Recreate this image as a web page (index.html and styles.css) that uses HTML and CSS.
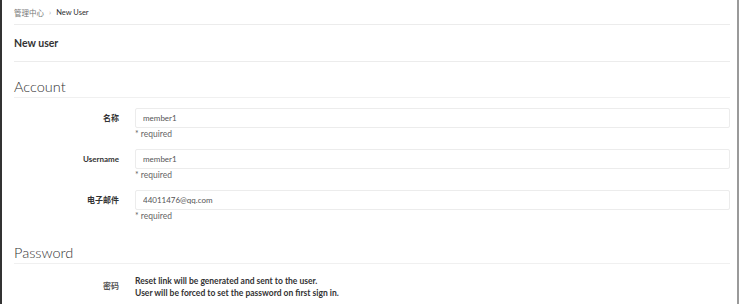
FILE: index.html
```html
<!DOCTYPE html>
<html lang="en">
<head>
  <meta charset="UTF-8" />
  <title>New user</title>
  <link rel="stylesheet" href="styles.css">
</head>
<body>
  <div class="page">
    <!-- Breadcrumb -->
    <div class="breadcrumb">
      <span class="crumb">管理中心</span>
      <span class="sep">›</span>
      <span class="crumb current">New User</span>
    </div>

    <h3 class="page-title">New user</h3>

    <!-- Account -->
    <div class="section">
      <h4 class="section-title">Account</h4>

      <div class="form-row">
        <label class="form-label">名称</label>
        <div class="form-field">
          <input class="form-input" type="text" value="member1">
          <div class="hint">* required</div>
        </div>
      </div>

      <div class="form-row">
        <label class="form-label">Username</label>
        <div class="form-field">
          <input class="form-input" type="text" value="member1">
          <div class="hint">* required</div>
        </div>
      </div>

      <div class="form-row">
        <label class="form-label">电子邮件</label>
        <div class="form-field">
          <input class="form-input" type="text" value="44011476@qq.com">
          <div class="hint">* required</div>
        </div>
      </div>
    </div>

    <!-- Password -->
    <div class="section">
      <h4 class="section-title">Password</h4>

      <div class="form-row">
        <label class="form-label pw-label">密码</label>
        <div class="form-field">
          <p class="note">Reset link will be generated and sent to the user.<br>
          User will be forced to set the password on first sign in.</p>
        </div>
      </div>
    </div>
  </div>
</body>
</html>
```

FILE: styles.css
```css
/* Global */
body {
  margin: 0;
  background-color: #ffffff;
  color: #2e2e2e;
  font-family: 'Lato', 'Noto Sans CJK SC', sans-serif;
  font-size: 8px;
  border-left: 2px solid #333;
  border-right: 2px solid #9a9a9a;
  height: 304px;
  box-sizing: border-box;
  overflow: hidden;
}

.page {
  padding: 0 7px 0 12px;
}

/* Breadcrumb */
.breadcrumb {
  height: 24px;
  display: flex;
  align-items: center;
  gap: 5px;
  border-bottom: 1px solid #ececec;
  color: #777;
  font-size: 7.5px;
}

.breadcrumb .current {
  color: #2e2e2e;
}

.breadcrumb .sep {
  color: #aaa;
}

/* Title */
.page-title {
  margin: 0;
  height: 36px;
  display: flex;
  align-items: center;
  font-size: 10.5px;
  font-weight: 700;
  color: #333;
  border-bottom: 1px solid #ececec;
}

/* Sections */
.section-title {
  margin: 16px 0 0;
  height: 19px;
  line-height: 18px;
  font-size: 14.5px;
  font-weight: 300;
  color: #333;
  border-bottom: 1px solid #f0f0f0;
}

.section + .section .section-title {
  margin-top: 23px;
}

.form-row {
  display: flex;
  align-items: flex-start;
  margin-top: 10px;
}

.form-label {
  width: 121px;
  flex-shrink: 0;
  box-sizing: border-box;
  text-align: right;
  padding-right: 16px;
  font-weight: 700;
  line-height: 20px;
  color: #333;
}

.form-field {
  flex: 1;
}

.form-input {
  display: block;
  width: 100%;
  box-sizing: border-box;
  height: 20px;
  border: 1px solid #ececec;
  border-radius: 2px;
  padding: 0 7px;
  font-family: inherit;
  font-size: 8px;
  color: #555;
  outline: none;
}

.hint {
  color: #666;
  font-size: 8.5px;
  margin-top: 1px;
  line-height: 10px;
}

.pw-label {
  line-height: 24px;
  color: #555;
}

.note {
  margin: 1px 0 0;
  font-size: 8.5px;
  font-weight: 700;
  line-height: 12px;
  color: #333;
}
```
